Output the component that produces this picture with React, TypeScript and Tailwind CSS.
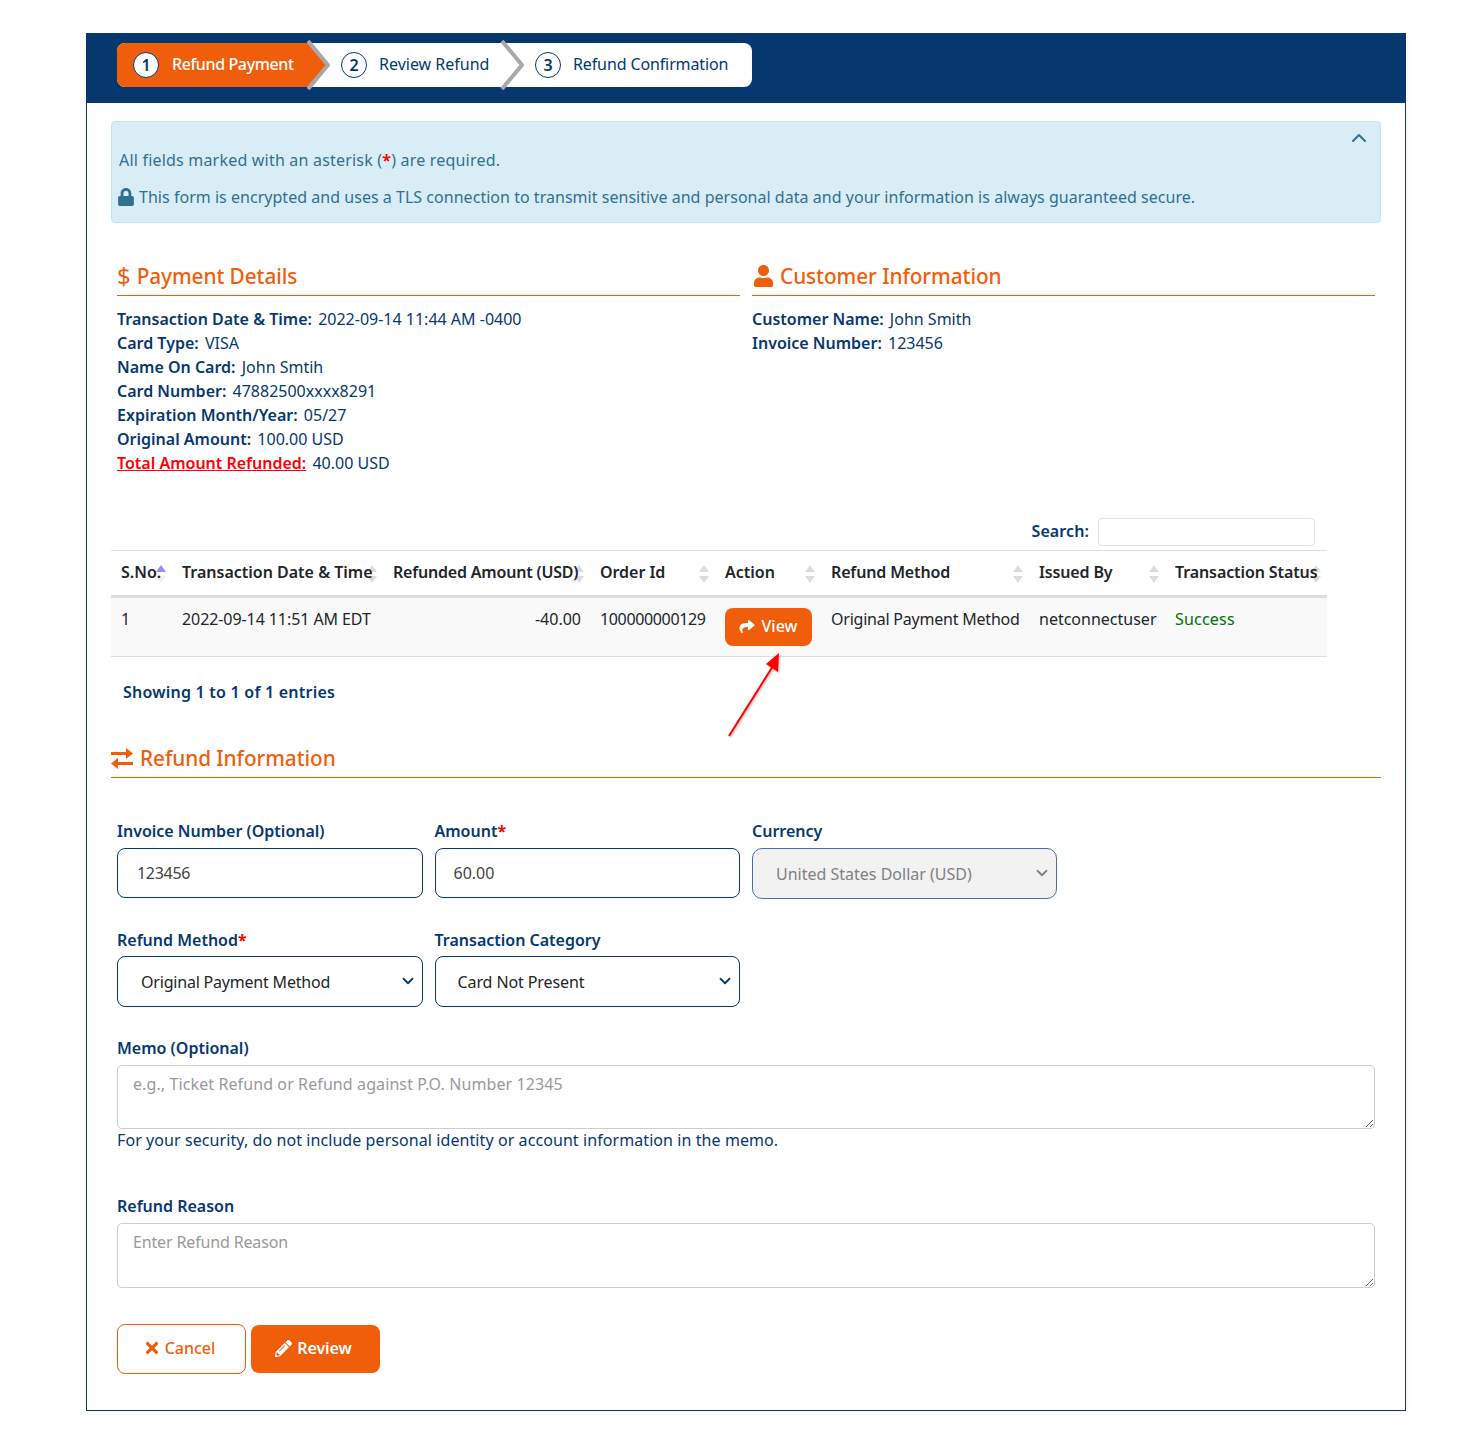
import type { ReactNode } from 'react';
import { ChevronDown, ChevronUp } from 'lucide-react';
import { FaLock, FaPencilAlt, FaShare, FaTimes, FaUser } from 'react-icons/fa';

const labelClass = 'block h-6 text-[16px] leading-6 font-semibold text-[#06376f]';
const fieldClass =
  'block w-full rounded-lg border border-[#06376f] bg-white text-[16px] text-[#444] focus:outline-none';
const textareaClass =
  'block w-full rounded-[5px] border border-[#ccc] bg-white px-[15px] py-[6px] text-[16px] leading-6 text-[#444] placeholder:text-[#999] focus:outline-none';

function Asterisk() {
  return <span className="font-bold text-[#f00]">*</span>;
}

function SortIcon({ active }: { active?: boolean }) {
  return (
    <svg viewBox="0 0 12 18" className="absolute top-[14px] right-[5px] h-[18px] w-3" aria-hidden="true">
      <path d="M6 0 L11 7 L1 7 Z" fill={active ? '#8f94e8' : '#dcdcdc'} />
      <path d="M6 18 L11 11 L1 11 Z" fill={active ? '#f1f1f1' : '#dcdcdc'} />
    </svg>
  );
}

function Th({ width, label, active, className }: { width: string; label: string; active?: boolean; className?: string }) {
  return (
    <th
      className={`${width} relative h-[48px] border-t border-b-[3px] border-t-[#ddd] border-b-[#ddd] p-0 pb-[3px] pl-[10px] text-left text-[16px] font-semibold whitespace-nowrap text-[#212529] ${className ?? ''}`}
    >
      <SortIcon active={active} />
      <span className="relative">{label}</span>
    </th>
  );
}

function Step({ n, label, className, ring }: { n: number; label: string; className: string; ring: string }) {
  return (
    <div className={`flex h-full items-center ${className}`}>
      <span
        className={`flex h-[26px] w-[26px] shrink-0 items-center justify-center rounded-full border-[1.5px] border-[#06376f] bg-white text-[16px] font-semibold tracking-normal text-[#06376f] ${ring}`}
      >
        {n}
      </span>
      <span className="-mt-[2px] whitespace-nowrap">{label}</span>
    </div>
  );
}

function Chevron({ left, start, tip, orange }: { left: string; start: number; tip: number; orange?: boolean }) {
  return (
    <svg viewBox="0 0 30 50" className={`absolute top-[-3px] h-[50px] w-[30px] ${left}`} aria-hidden="true">
      {orange && <path d={`M0 3 L${tip - 1} 25 L0 47 Z`} fill="#f05e0c" />}
      <path
        d={`M${start} 1 L${tip} 25 L${start} 49`}
        fill="none"
        stroke="#a8a8a8"
        strokeWidth="4"
        strokeLinejoin="round"
      />
    </svg>
  );
}

function SectionHeading({ icon, children, className }: { icon: ReactNode; children: ReactNode; className: string }) {
  return (
    <h2
      className={`flex items-center border-b border-[#f05e0c] pb-[3px] text-[20.8px] leading-none font-medium tracking-[-0.08px] text-[#f05e0c] ${className}`}
    >
      {icon}
      {children}
    </h2>
  );
}

function Detail({ label, value }: { label: string; value: string }) {
  return (
    <div>
      <span className="mr-[2px] font-semibold">{label}:</span> {value}
    </div>
  );
}

export default function App() {
  return (
    <div className="min-h-[1435px] bg-white pt-[33px] pl-[86px] font-['Noto_Sans',sans-serif] text-[16px] leading-6 text-[#06376f]">
      <div className="relative w-[1320px] border border-t-0 border-[#06376f] shadow-[0_2px_6px_rgba(0,0,0,0.04)]">
        {/* Stepper band */}
        <div className="-mx-px flex h-[70px] items-start bg-[#06376f] pt-[10px] pl-[31px]">
          <div className="relative flex h-[44px] w-[635px] rounded-lg bg-white text-[16px] text-[#06376f]">
            <Step
              n={1}
              label="Refund Payment"
              ring="mr-[13px]"
              className="w-[193px] rounded-l-lg bg-[#f05e0c] pl-4 font-medium tracking-[-0.38px] text-white"
            />
            <Chevron left="left-[190px]" start={1} tip={21} orange />
            <Step n={2} label="Review Refund" ring="mr-3" className="w-[192px] pl-[31px]" />
            <Chevron left="left-[383px]" start={2} tip={22} />
            <Step n={3} label="Refund Confirmation" ring="mr-3" className="flex-1 pl-[33px] tracking-[-0.12px]" />
          </div>
        </div>

        <div className="px-6">
          {/* Notice */}
          <div className="relative mt-[18px] h-[102px] rounded border border-[#bce8f1] bg-[#d9edf7] pt-[26px] pl-[7px] text-[#31708f]">
            <p className="tracking-[0.2px]">
              All fields marked with an asterisk (<Asterisk />) are required.
            </p>
            <p className="mt-[13px] flex items-center tracking-[0.03px]">
              <FaLock className="mr-1 -ml-[2px] h-[18px] w-[18px] shrink-0" />
              This form is encrypted and uses a TLS connection to transmit sensitive and personal data and your
              information is always guaranteed secure.
            </p>
            <ChevronUp className="absolute top-[4px] right-[9px] h-6 w-6" strokeWidth={2} />
          </div>

          {/* Payment and customer details */}
          <div className="grid grid-cols-2">
            <div className="px-1.5">
              <SectionHeading className="mt-[37px] h-[36px]" icon={<span className="mr-[6px] text-[24px] font-normal">$</span>}>
                Payment Details
              </SectionHeading>
              <div className="pt-[11px]">
                <Detail label="Transaction Date & Time" value="2022-09-14 11:44 AM -0400" />
                <Detail label="Card Type" value="VISA" />
                <Detail label="Name On Card" value="John Smtih" />
                <Detail label="Card Number" value="47882500xxxx8291" />
                <Detail label="Expiration Month/Year" value="05/27" />
                <Detail label="Original Amount" value="100.00 USD" />
                <div>
                  <span className="mr-[2px] font-semibold text-[#f00] underline">Total Amount Refunded:</span> 40.00 USD
                </div>
              </div>
            </div>
            <div className="px-1.5">
              <SectionHeading className="mt-[37px] h-[36px]" icon={<FaUser className="mr-[5px] h-[22px] w-[23px]" />}>
                Customer Information
              </SectionHeading>
              <div className="pt-[11px]">
                <Detail label="Customer Name" value="John Smith" />
                <Detail label="Invoice Number" value="123456" />
              </div>
            </div>
          </div>

          {/* Refund history */}
          <div className="w-[1216px]">
            <div className="mt-[43px] flex h-7 items-center justify-end pr-3">
              <label htmlFor="history-search" className="mr-[9px] pb-[3px] font-semibold tracking-[0.1px]">
                Search:
              </label>
              <input
                id="history-search"
                type="search"
                className="h-7 w-[217px] rounded border border-[#e2e2e2] bg-white focus:outline-none"
              />
            </div>
            <table className="mt-1 w-[1216px] table-fixed border-separate border-spacing-0">
              <thead>
                <tr>
                  <Th width="w-[61px]" label="S.No." active />
                  <Th width="w-[211px]" label="Transaction Date & Time" />
                  <Th width="w-[207px]" label="Refunded Amount (USD)" className="tracking-[-0.2px]" />
                  <Th width="w-[125px]" label="Order Id" className="tracking-[-0.05px]" />
                  <Th width="w-[106px]" label="Action" />
                  <Th width="w-[208px]" label="Refund Method" className="tracking-[-0.15px]" />
                  <Th width="w-[136px]" label="Issued By" className="tracking-[-0.15px]" />
                  <Th width="w-[162px]" label="Transaction Status" className="tracking-[-0.1px]" />
                </tr>
              </thead>
              <tbody>
                <tr className="bg-[#f9f9f9] align-top text-[16px] whitespace-nowrap text-[#212529]">
                  <td className="h-[59px] border-b border-[#ddd] pt-[9px] pl-[10px]">1</td>
                  <td className="border-b border-[#ddd] pt-[9px] pl-[10px] tracking-[-0.08px]">2022-09-14 11:51 AM EDT</td>
                  <td className="border-b border-[#ddd] pt-[9px] pr-[9px] text-right">-40.00</td>
                  <td className="border-b border-[#ddd] pt-[9px] pl-[10px] tracking-[-0.35px]">100000000129</td>
                  <td className="border-b border-[#ddd] pt-[10px] pl-[10px]">
                    <button
                      type="button"
                      className="flex h-[38px] w-[87px] items-center justify-center rounded-lg bg-[#f05e0c] pr-[2px] pb-[2px] font-medium text-white"
                    >
                      <FaShare className="mr-[6px] h-[15px] w-[18px]" />
                      <span>View</span>
                    </button>
                  </td>
                  <td className="border-b border-[#ddd] pt-[9px] pl-[10px] tracking-[-0.22px]">Original Payment Method</td>
                  <td className="border-b border-[#ddd] pt-[9px] pl-[10px]">netconnectuser</td>
                  <td className="border-b border-[#ddd] pt-[9px] pl-[10px] tracking-[0.2px] text-[#007000]">Success</td>
                </tr>
              </tbody>
            </table>
            <div className="mt-[23px] pl-3 font-semibold tracking-[0.23px]">Showing 1 to 1 of 1 entries</div>
          </div>

          {/* Refund form */}
          <SectionHeading
            className="mt-[38px] h-[36px]"
            icon={
              <svg viewBox="0 0 22 23" className="mr-[7px] h-[23px] w-[22px] shrink-0" fill="currentColor" aria-hidden="true">
                <path d="M0 5h15V1l7 5.5-7 5.5V8H0z" />
                <path d="M22 15H7v-4l-7 5.5 7 5.5v-4h15z" />
              </svg>
            }
          >
            Refund Information
          </SectionHeading>

          <div className="px-1.5">
            <div className="mt-[41px] grid grid-cols-4 gap-x-3">
              <div>
                <label className={labelClass}>Invoice Number (Optional)</label>
                <input readOnly value="123456" className={`${fieldClass} mt-[5px] h-[50px] pl-[19px] tracking-[-0.3px]`} />
              </div>
              <div>
                <label className={labelClass}>
                  Amount
                  <Asterisk />
                </label>
                <input readOnly value="60.00" className={`${fieldClass} mt-[5px] h-[50px] pl-[18px]`} />
              </div>
              <div>
                <label className={labelClass}>Currency</label>
                <div className="relative mt-[5px] mr-[0.5px]">
                  <select
                    disabled
                    className="block h-[51px] w-full appearance-none rounded-[10px] border border-[#4a6f9f] bg-[#f2f2f2] pl-[23px] text-[16px] text-[#808080]"
                  >
                    <option>United States Dollar (USD)</option>
                  </select>
                  <ChevronDown className="absolute top-4 right-[6px] h-[18px] w-[18px] text-[#808080]" strokeWidth={2.4} />
                </div>
              </div>
            </div>

            <div className="mt-[29px] grid grid-cols-4 gap-x-3">
              <div>
                <label className={labelClass}>
                  Refund Method
                  <Asterisk />
                </label>
                <div className="relative mt-1">
                  <select className={`${fieldClass} h-[51px] appearance-none pl-[23px] tracking-[-0.2px] text-[#212529]`}>
                    <option>Original Payment Method</option>
                  </select>
                  <ChevronDown className="absolute top-4 right-[6px] h-[18px] w-[18px] text-[#06376f]" strokeWidth={2.4} />
                </div>
              </div>
              <div>
                <label className={labelClass}>Transaction Category</label>
                <div className="relative mt-1">
                  <select className={`${fieldClass} h-[51px] appearance-none pl-[22px] tracking-[-0.1px] text-[#212529]`}>
                    <option>Card Not Present</option>
                  </select>
                  <ChevronDown className="absolute top-4 right-[6px] h-[18px] w-[18px] text-[#06376f]" strokeWidth={2.4} />
                </div>
              </div>
            </div>

            <label className={`${labelClass} mt-[29px]`}>Memo (Optional)</label>
            <textarea
              className={`${textareaClass} mt-[5px] h-[64px] tracking-[0.1px]`}
              placeholder="e.g., Ticket Refund or Refund against P.O. Number 12345"
            />
            <p className="-mt-px tracking-[0.08px]">
              For your security, do not include personal identity or account information in the memo.
            </p>

            <label className={`${labelClass} mt-[42px]`}>Refund Reason</label>
            <textarea
              className={`${textareaClass} mt-[5px] h-[65px] tracking-[-0.15px]`}
              placeholder="Enter Refund Reason"
            />

            <div className="mt-9 flex items-center gap-[5px] pb-9">
              <button
                type="button"
                className="flex h-[50px] w-[129px] items-center justify-center rounded-lg border border-[#f05e0c] bg-white pr-[5px] pb-[2px] font-medium text-[#f05e0c]"
              >
                <FaTimes className="mr-[4px] h-[18px] w-[18px]" />
                Cancel
              </button>
              <button
                type="button"
                className="flex h-[48px] w-[129px] items-center justify-center rounded-lg bg-[#f05e0c] pr-1 pb-[2px] font-semibold tracking-[-0.1px] text-white"
              >
                <FaPencilAlt className="mr-[5px] h-[17px] w-[17px]" />
                Review
              </button>
            </div>
          </div>
        </div>

        {/* Annotation arrow over the View button */}
        <svg
          viewBox="0 0 60 92"
          className="absolute top-[617px] left-[637px] h-[92px] w-[60px] drop-shadow-[1px_1px_1px_rgba(0,0,0,0.3)]"
          aria-hidden="true"
        >
          <path d="M5 86 L49 16" fill="none" stroke="#f00" strokeWidth="2" />
          <path d="M55 3 L42 14 L54 22 Z" fill="#f00" />
        </svg>
      </div>
    </div>
  );
}
